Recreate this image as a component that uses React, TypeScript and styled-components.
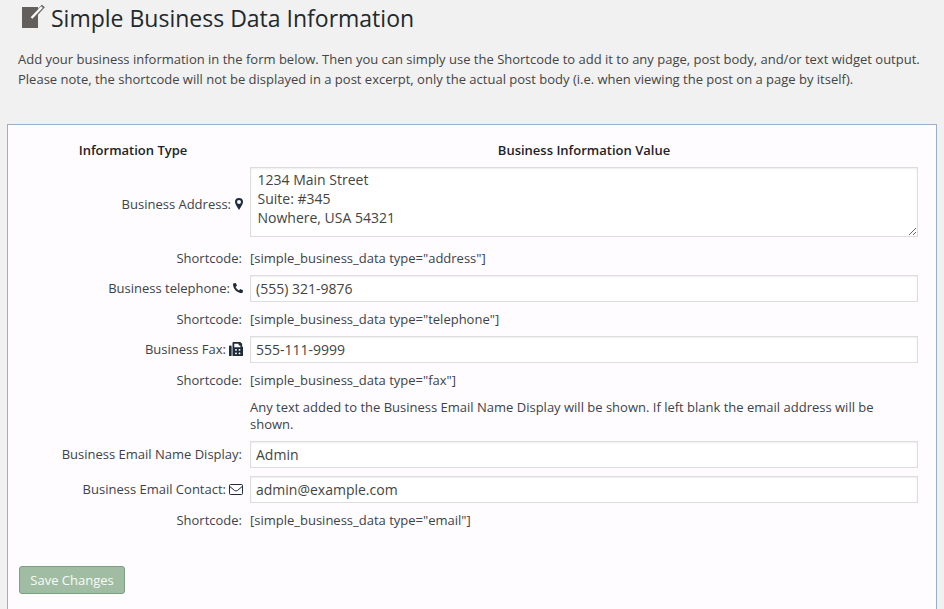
import React from "react";
import styled, { createGlobalStyle } from "styled-components";
import { FaPhone, FaFax } from "react-icons/fa";

const Global = createGlobalStyle`
  html, body { margin: 0; padding: 0; background: #f1f1f1; height: 100%; overflow: hidden; }
  body { font-family: "Open Sans", "Noto Sans", sans-serif; font-size: 13px; line-height: 1.4; color: #444; }
  * { box-sizing: border-box; }
`;

const Page = styled.div`
  width: 944px;
  height: 609px;
  overflow: hidden;
  padding: 0 8px 0 7px;
`;

const Heading = styled.h1`
  display: flex;
  align-items: center;
  gap: 6px;
  margin: 0;
  padding: 0 0 0 14px;
  height: 36px;
  font-size: 23px;
  line-height: 32px;
  font-weight: 400;
  color: #23282d;
`;

const Intro = styled.p`
  margin: 13px 0 0 11px;
  width: 925px;
  font-size: 13px;
  line-height: 20px;
  color: #444;
  white-space: nowrap;
`;

const Panel = styled.form`
  margin-top: 35px;
  height: 520px;
  width: 930px;
  background: #fefcff;
  border: 1px solid #98b0cb;
  padding: 15px 17px 0 15px;
`;

const FormGrid = styled.div`
  display: grid;
  grid-template-columns: 220px 668px;
  column-gap: 7px;
  align-items: center;
`;

const HeadCell = styled.div`
  font-weight: 600;
  color: #1d2327;
  text-align: center;
  line-height: 20px;
  height: 27px;
`;

const Label = styled.label<{ $drop?: number }>`
  display: flex;
  justify-content: flex-end;
  align-items: center;
  gap: 3px;
  color: #3c434a;
  line-height: 18px;
  padding: ${(p) => (p.$drop ? `${p.$drop}px 1px 0 0` : "0 1px 1px 0")};
  svg {
    color: #1d2b3a;
    flex: none;
    margin-right: -1px;
  }
`;

const ShortLabel = styled.div`
  color: #3c434a;
  line-height: 18px;
  text-align: right;
  padding-right: 1px;
`;

const ShortValue = styled.div`
  color: #3c434a;
  font-size: 13px;
  line-height: 18px;
`;

const Note = styled.div`
  color: #3c434a;
  font-size: 13px;
  line-height: 17px;
  padding: 2px 40px 1px 0;
`;

const Field = styled.input`
  display: block;
  width: 668px;
  height: 27px;
  padding: 0 5px;
  border: 1px solid #dddddd;
  box-shadow: inset 0 1px 2px rgba(0, 0, 0, 0.07);
  background: #fff;
  color: #444;
  font-family: inherit;
  font-size: 14px;
  outline: none;
`;

const Area = styled.textarea`
  display: block;
  width: 668px;
  height: 70px;
  padding: 2px 6.5px;
  border: 1px solid #dddddd;
  box-shadow: inset 0 1px 2px rgba(0, 0, 0, 0.07);
  background: #fff;
  color: #444;
  font-family: inherit;
  font-size: 14px;
  line-height: 19px;
  outline: none;
`;

const Gap = styled.div<{ $h: number }>`
  grid-column: 1 / -1;
  height: ${(p) => p.$h}px;
`;

const SaveButton = styled.button`
  display: block;
  margin: 37px 0 0 -4px;
  width: 106px;
  height: 28px;
  border: 1px solid #7d9f83;
  border-radius: 3px;
  background: #a0bda3;
  color: #f8fbf8;
  font-family: inherit;
  font-size: 13px;
  padding: 0;
`;

const EditIcon = () => (
  <svg width="24" height="26" viewBox="0 0 24 26" style={{ marginTop: -4, flex: "none" }}>
    <rect x="1" y="4" width="16" height="21" fill="#635f5d" />
    <path d="M15.500 10.500 22.300 3" stroke="#635f5d" strokeWidth="4" fill="none" />
    <path d="M10.500 15 21 4" stroke="#fafafa" strokeWidth="2.400" fill="none" />
  </svg>
);

const PinIcon = () => (
  <svg width="8" height="12" viewBox="0 0 8 12" style={{ marginLeft: 1 }}>
    <path
      fillRule="evenodd"
      fill="currentColor"
      d="M4 0a4 4 0 0 0-4 4c0 2.2 4 8 4 8s4-5.800 4-8a4 4 0 0 0-4-4zm0 6a2 2 0 1 1 0-4 2 2 0 0 1 0 4z"
    />
  </svg>
);

const MailIcon = () => (
  <svg width="14" height="11" viewBox="0 0 14 11" fill="none" stroke="currentColor" strokeWidth="1">
    <rect x=".5" y=".5" width="13" height="10" rx="1" />
    <path d="M.8 2.500 5.600 6.500q1.400 1 2.800 0L13.200 2.500" />
  </svg>
);

const rowsShort = (code: string) => (
  <>
    <ShortLabel>Shortcode:</ShortLabel>
    <ShortValue>{code}</ShortValue>
  </>
);

export default function App() {
  return (
    <Page>
      <Global />
      <Heading>
        <EditIcon />
        Simple Business Data Information
      </Heading>
      <Intro>
        Add your business information in the form below. Then you can simply use the Shortcode to add it to any page, post body, and/or text widget output.
        <br />
        Please note, the shortcode will not be displayed in a post excerpt, only the actual post body (i.e. when viewing the post on a page by itself).
      </Intro>
      <Panel onSubmit={(e) => e.preventDefault()}>
        <FormGrid>
          <HeadCell>Information Type</HeadCell>
          <HeadCell>Business Information Value</HeadCell>

          <Label $drop={4}>
            Business Address: <PinIcon />
          </Label>
          <Area readOnly value={"1234 Main Street\nSuite: #345\nNowhere, USA 54321"} />
          <Gap $h={12} />

          {rowsShort('[simple_business_data type="address"]')}
          <Gap $h={8} />

          <Label>
            Business telephone: <FaPhone size={10} style={{ transform: "scaleX(-1)" }} />
          </Label>
          <Field readOnly value="(555) 321-9876" />
          <Gap $h={8} />

          {rowsShort('[simple_business_data type="telephone"]')}
          <Gap $h={8} />

          <Label>
            Business Fax: <FaFax size={14} />
          </Label>
          <Field readOnly value="555-111-9999" />
          <Gap $h={8} />

          {rowsShort('[simple_business_data type="fax"]')}
          <Gap $h={8} />

          <div />
          <Note>
            Any text added to the Business Email Name Display will be shown. If left blank the email address will be shown.
          </Note>
          <Gap $h={7} />

          <Label>Business Email Name Display:</Label>
          <Field readOnly value="Admin" />
          <Gap $h={8} />

          <Label>
            Business Email Contact: <MailIcon />
          </Label>
          <Field readOnly value="admin@example.com" />
          <Gap $h={8} />

          {rowsShort('[simple_business_data type="email"]')}
        </FormGrid>
        <SaveButton type="button">Save Changes</SaveButton>
      </Panel>
    </Page>
  );
}
